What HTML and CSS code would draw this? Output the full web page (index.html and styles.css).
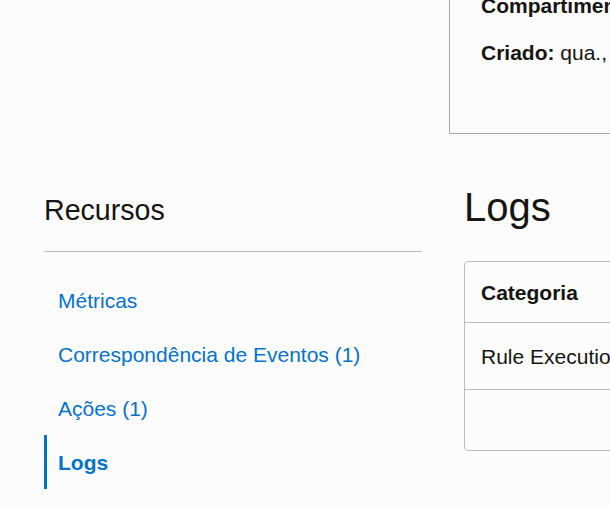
FILE: index.html
```html
<!DOCTYPE html>
<html lang="pt">
<head>
<meta charset="utf-8">
<title>Regra - Logs</title>
<link rel="stylesheet" href="styles.css">
</head>
<body>
<div class="page">
  <div class="top">
    <div class="top-spacer"></div>
    <section class="info-panel">
      <p class="info-line first"><b>Compartimento:</b> root (raiz)</p>
      <p class="info-line"><b>Criado:</b> qua., 12 de jun. de 2024 14:32:10 UTC</p>
    </section>
  </div>
  <div class="lower">
    <aside class="resources">
      <h2 class="resources-title">Recursos</h2>
      <hr class="resources-rule">
      <nav class="resources-nav">
        <a class="nav-item" href="#">Métricas</a>
        <a class="nav-item" href="#">Correspondência de Eventos (1)</a>
        <a class="nav-item" href="#">Ações (1)</a>
        <a class="nav-item active" href="#">Logs</a>
      </nav>
    </aside>
    <main class="logs">
      <h1 class="logs-title">Logs</h1>
      <div class="table-box">
        <div class="row head">
          <div class="cell c1">Categoria</div>
          <div class="cell c2">Nome do Log</div>
          <div class="cell c3">Ativar Log</div>
        </div>
        <div class="row body-row">
          <div class="cell c1">Rule Execution Log</div>
          <div class="cell c2">rule_execution</div>
          <div class="cell c3">Ativado</div>
        </div>
        <div class="row foot"></div>
      </div>
    </main>
  </div>
</div>
</body>
</html>
```

FILE: styles.css
```css
html, body {
  margin: 0;
  padding: 0;
  background: #fcfcfc;
  overflow: hidden;
  width: 610px;
  height: 507px;
}
body {
  font-family: "Liberation Sans", Arial, sans-serif;
  color: #161513;
  font-size: 21px;
}
.page {
  width: 1100px;
}
.top {
  display: flex;
}
.top-spacer {
  width: 449px;
  flex: none;
}
.info-panel {
  width: 620px;
  border-left: 1px solid #a9a9a9;
  border-bottom: 1px solid #a9a9a9;
  padding: 0 0 68px 31px;
  white-space: nowrap;
}
.info-line {
  margin: 22px 0 0;
  line-height: 25px;
}
.info-line.first {
  margin-top: -7px;
}
.info-line b {
  font-weight: bold;
}
.lower {
  display: grid;
  grid-template-columns: 378px 600px;
  column-gap: 42px;
  padding-left: 44px;
}
.resources-title {
  margin: 59px 0 0;
  font-size: 28.6px;
  font-weight: normal;
  line-height: 34px;
}
.resources-rule {
  margin: 24px 0 0;
  border: 0;
  border-top: 1px solid #bab9c4;
  height: 0;
}
.resources-nav {
  display: flex;
  flex-direction: column;
  margin-top: 21px;
}
.nav-item {
  display: block;
  color: #0572ce;
  text-decoration: none;
  line-height: 24px;
  padding: 16px 0 14px 11px;
  border-left: 3px solid transparent;
}
.nav-item.active {
  border-left-color: #0572ce;
  font-weight: bold;
}
.logs-title {
  margin: 49px 0 0;
  font-size: 40px;
  font-weight: normal;
  line-height: 48px;
}
.table-box {
  margin-top: 30px;
  border: 1px solid #b9bdc2;
  border-radius: 4px;
  background: #fcfcfc;
}
.row {
  display: flex;
  align-items: center;
  box-sizing: border-box;
  border-bottom: 1px solid #b9bdc2;
}
.row.head {
  height: 61px;
  padding-top: 2px;
  font-weight: bold;
}
.row.body-row {
  height: 67px;
  padding-top: 2px;
}
.row.foot {
  height: 60px;
  border-bottom: 0;
}
.cell {
  padding-left: 16px;
  white-space: nowrap;
}
.c1 { width: 190px; }
.c2 { width: 190px; }
.c3 { width: 150px; }
```
